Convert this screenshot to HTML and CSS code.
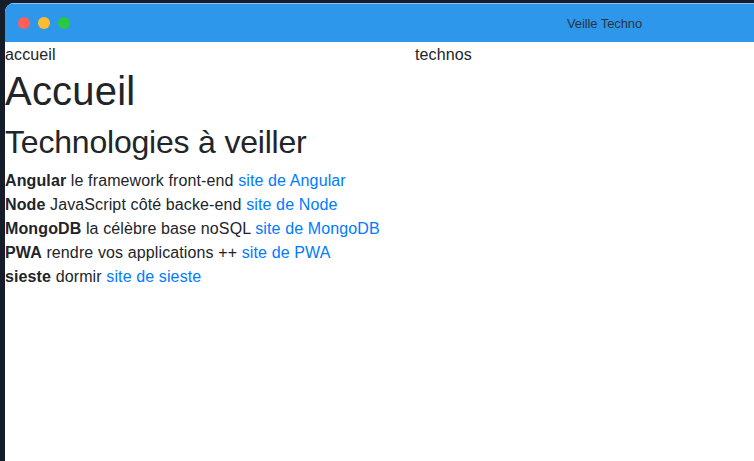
FILE: index.html
```html
<!DOCTYPE html>
<html lang="fr">
<head>
<meta charset="utf-8">
<title>Veille Techno</title>
<link rel="stylesheet" href="styles.css">
</head>
<body>
<div class="window">
  <div class="titlebar">
    <div class="lights">
      <span class="light red"></span>
      <span class="light yellow"></span>
      <span class="light green"></span>
    </div>
    <div class="title">Veille Techno</div>
  </div>
  <div class="content">
    <nav class="nav">
      <div class="nav-item nav-left">accueil</div>
      <div class="nav-item">technos</div>
    </nav>
    <h1>Accueil</h1>
    <h2>Technologies à veiller</h2>
    <div class="list">
      <div class="row"><b>Angular</b> le framework front-end <a href="#">site de Angular</a></div>
      <div class="row"><b>Node</b> JavaScript côté backe-end <a href="#">site de Node</a></div>
      <div class="row"><b>MongoDB</b> la célèbre base noSQL <a href="#">site de MongoDB</a></div>
      <div class="row"><b>PWA</b> rendre vos applications ++ <a href="#">site de PWA</a></div>
      <div class="row"><b>sieste</b> dormir <a href="#">site de sieste</a></div>
    </div>
  </div>
</div>
</body>
</html>
```
FILE: styles.css
```css
html, body {
  margin: 0;
  height: 100%;
}
body {
  background: #161d2a;
  overflow: hidden;
  font-family: "Liberation Sans", Arial, sans-serif;
}
.window {
  margin: 3px 0 0 5px;
  height: calc(100% - 3px);
  background: #fff;
  border-top-left-radius: 9px;
  overflow: hidden;
}
.titlebar {
  height: 39px;
  background: #2d97ec;
  border-top: 1px solid #8fc4f2;
  box-sizing: border-box;
  display: flex;
  align-items: center;
}
.lights {
  display: flex;
  gap: 8px;
  padding-left: 13px;
}
.light {
  width: 12px;
  height: 12px;
  border-radius: 50%;
}
.red { background: #fe5f57; }
.yellow { background: #febc2e; }
.green { background: #28c840; }
.title {
  margin-left: 497px;
  font-size: 13px;
  color: #2a3544;
  letter-spacing: -0.1px;
}
.content {
  color: #212529;
  font-size: 16px;
  line-height: 24px;
  letter-spacing: 0.12px;
  padding-top: 1px;
}
.nav {
  display: flex;
}
.nav-left {
  width: 410px;
}
h1 {
  font-size: 40px;
  font-weight: 500;
  line-height: 48px;
  margin: 0 0 8px;
  letter-spacing: 0.2px;
}
h2 {
  font-size: 32px;
  font-weight: 500;
  line-height: 38px;
  margin: 0 0 8px;
  letter-spacing: -0.2px;
}
b {
  font-weight: 700;
}
a {
  color: #007bff;
  text-decoration: none;
}
```
